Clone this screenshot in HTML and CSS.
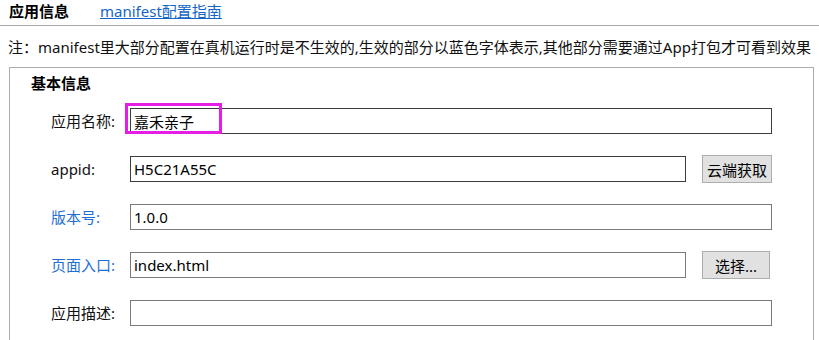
FILE: index.html
```html
<!DOCTYPE html>
<html lang="zh-CN">
<head>
<meta charset="utf-8">
<title>应用信息</title>
<link rel="stylesheet" href="styles.css">
</head>
<body>
<div class="header">
  <span class="title">应用信息</span>
  <a class="guide" href="#">manifest配置指南</a>
</div>
<p class="note">注：manifest里大部分配置在真机运行时是不生效的,生效的部分以蓝色字体表示,其他部分需要通过App打包才可看到效果</p>
<section class="panel">
  <h3 class="panel-title">基本信息</h3>
  <div class="row">
    <label class="label">应用名称:</label>
    <div class="field">
      <input class="input dark" type="text" value="嘉禾亲子">
      <span class="highlight"></span>
    </div>
  </div>
  <div class="row">
    <label class="label">appid:</label>
    <div class="field">
      <input class="input dark" type="text" value="H5C21A55C">
    </div>
    <button class="btn">云端获取</button>
  </div>
  <div class="row">
    <label class="label blue">版本号:</label>
    <div class="field">
      <input class="input" type="text" value="1.0.0">
    </div>
  </div>
  <div class="row">
    <label class="label blue">页面入口:</label>
    <div class="field">
      <input class="input" type="text" value="index.html">
    </div>
    <button class="btn btn-pick">选择...</button>
  </div>
  <div class="row">
    <label class="label">应用描述:</label>
    <div class="field">
      <input class="input" type="text" value="">
    </div>
  </div>
</section>
</body>
</html>
```
FILE: styles.css
```css
html, body {
  margin: 0;
  padding: 0;
  background: #ffffff;
}
body {
  font-family: "Noto Sans", "Noto Sans CJK SC", sans-serif;
  font-size: 15px;
  color: #111;
  width: 819px;
  overflow: hidden;
}
.header {
  display: flex;
  align-items: flex-start;
  height: 25px;
  border-bottom: 1px solid #a9a9a9;
  padding-left: 9px;
  box-sizing: content-box;
}
.title {
  font-weight: bold;
  line-height: 22px;
  color: #000;
}
.guide {
  margin-left: 31px;
  line-height: 22px;
  color: #1565c8;
  text-decoration: underline;
}
.note {
  margin: 10px 0 0 8px;
  line-height: 22px;
  white-space: nowrap;
  color: #111;
}
.panel {
  margin: 9px 5px 0 9px;
  border: 1px solid #ababab;
  padding: 4px 41px 30px 41px;
  display: flex;
  flex-direction: column;
  gap: 22px;
}
.panel-title {
  margin: 0 0 -8px -20px;
  font-size: 15px;
  font-weight: bold;
  line-height: 22px;
  color: #000;
}
.row {
  display: flex;
  align-items: center;
  height: 26px;
}
.label {
  width: 79px;
  flex: none;
  line-height: 22px;
  color: #111;
}
.label.blue {
  color: #1f6fd2;
}
.field {
  position: relative;
  flex: 1;
  height: 26px;
}
.input {
  box-sizing: border-box;
  width: 100%;
  height: 26px;
  margin: 0;
  padding: 0 4px 0 3px;
  border: 1px solid #7a7a7a;
  border-radius: 0;
  font-family: inherit;
  font-size: 15px;
  color: #000;
  outline: none;
  background: #fff;
}
.input.dark {
  border-color: #3c3c3c;
}
.highlight {
  position: absolute;
  left: -5px;
  top: -5px;
  width: 97px;
  height: 31px;
  box-sizing: border-box;
  border: 3px solid #e41ee4;
  pointer-events: none;
}
.btn {
  flex: none;
  margin-left: 16px;
  width: 70px;
  height: 28px;
  box-sizing: border-box;
  border: 1px solid #adadad;
  background: #e1e1e1;
  font-family: inherit;
  font-size: 15px;
  color: #000;
  padding: 0;
  border-radius: 0;
}
.btn-pick {
  width: 68px;
  margin-right: 2px;
}
```
